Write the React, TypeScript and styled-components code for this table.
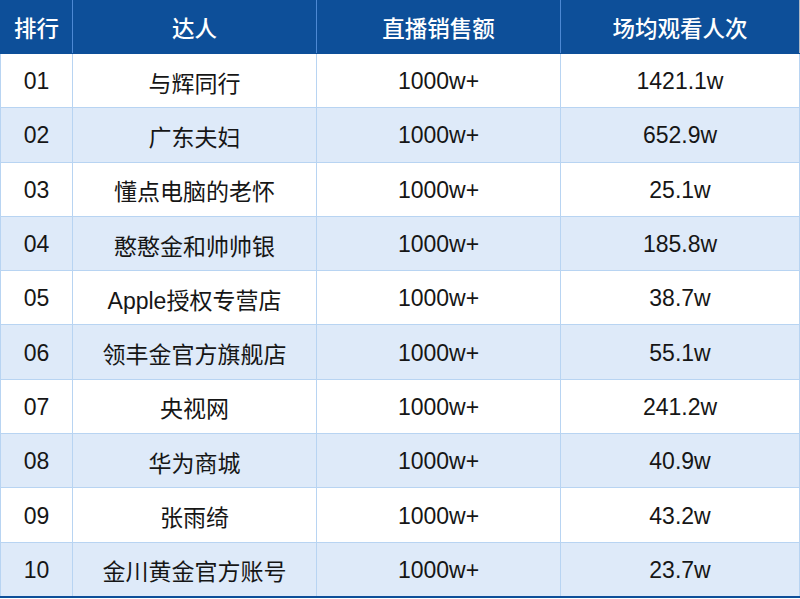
import React from 'react'
import styled, { createGlobalStyle } from 'styled-components'

const rows = [
  ['01', '与辉同行', '1000w+', '1421.1w'],
  ['02', '广东夫妇', '1000w+', '652.9w'],
  ['03', '懂点电脑的老怀', '1000w+', '25.1w'],
  ['04', '憨憨金和帅帅银', '1000w+', '185.8w'],
  ['05', 'Apple授权专营店', '1000w+', '38.7w'],
  ['06', '领丰金官方旗舰店', '1000w+', '55.1w'],
  ['07', '央视网', '1000w+', '241.2w'],
  ['08', '华为商城', '1000w+', '40.9w'],
  ['09', '张雨绮', '1000w+', '43.2w'],
  ['10', '金川黄金官方账号', '1000w+', '23.7w'],
]

const GlobalStyle = createGlobalStyle`
  body {
    margin: 0;
    background: #ffffff;
    font-family: 'Liberation Sans', Arial, 'Noto Sans CJK SC', sans-serif;
  }
`

const App = () => {
  return (
    <>
      <GlobalStyle />
      <Wrap>
        <Table>
          <colgroup>
            <col style={{ width: 72 }} />
            <col style={{ width: 244 }} />
            <col style={{ width: 244 }} />
            <col />
          </colgroup>
          <thead>
            <tr>
              <Th>排行</Th>
              <Th>达人</Th>
              <Th>直播销售额</Th>
              <Th>场均观看人次</Th>
            </tr>
          </thead>
          <tbody>
            {rows.map((r, i) => (
              <Row key={r[0]} $alt={i % 2 === 1}>
                {r.map((c, j) => (
                  <Td key={j}>{c}</Td>
                ))}
              </Row>
            ))}
          </tbody>
        </Table>
      </Wrap>
    </>
  )
}

const Wrap = styled.div`
  width: 800px;
  height: 599px;
  overflow: hidden;
`

const Table = styled.table`
  width: 800px;
  border-collapse: collapse;
  table-layout: fixed;
  border-bottom: 2px solid #0d4f99;
  border-right: 1px solid #b0b8c4;
`

const Th = styled.th`
  height: 53px;
  padding: 0;
  background: #0d4f99;
  color: #ffffff;
  font-family: 'Noto Sans CJK SC', sans-serif;
  font-size: 22.5px;
  font-weight: 500;
  text-align: center;
  border-left: 1px solid #4d89d4;
  border-bottom: 1px solid #0d4f99;

  &:first-child {
    border-left: 1px solid #0d4f99;
  }
`

const Row = styled.tr<{ $alt: boolean }>`
  background: ${(p) => (p.$alt ? '#deeaf9' : '#ffffff')};
`

const Td = styled.td`
  height: 51.3px;
  padding: 2px 0 0;
  text-align: center;
  font-size: 23px;
  color: #161616;
  border: 1px solid #b8d4f2;
`

export default App
